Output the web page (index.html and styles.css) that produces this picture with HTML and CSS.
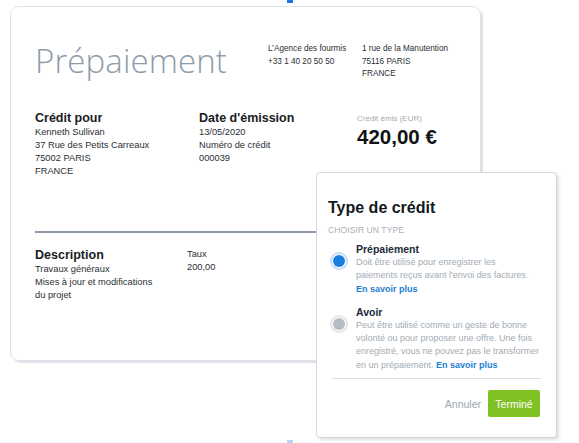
FILE: index.html
```html
<!DOCTYPE html>
<html lang="fr">
<head>
<meta charset="utf-8">
<title>Prépaiement</title>
<link rel="stylesheet" href="styles.css">
</head>
<body>
<div class="handle handle-top"></div>
<div class="card">
  <header class="head">
    <h1 class="title">Prépaiement</h1>
    <div class="addr">
      <div>L’Agence des fourmis</div>
      <div>+33 1 40 20 50 50</div>
    </div>
    <div class="addr">
      <div>1 rue de la Manutention</div>
      <div>75116 PARIS</div>
      <div>FRANCE</div>
    </div>
  </header>
  <section class="meta">
    <div class="col">
      <h2 class="h">Crédit pour</h2>
      <div class="lines">
        <div>Kenneth Sullivan</div>
        <div>37 Rue des Petits Carreaux</div>
        <div>75002 PARIS</div>
        <div>FRANCE</div>
      </div>
    </div>
    <div class="col">
      <h2 class="h">Date d'émission</h2>
      <div class="lines">
        <div>13/05/2020</div>
        <div>Numéro de crédit</div>
        <div>000039</div>
      </div>
    </div>
    <div class="col total">
      <div class="total-label">Crédit émis (EUR)</div>
      <div class="total-value">420,00 €</div>
    </div>
  </section>
  <hr class="rule">
  <section class="items">
    <div class="col">
      <h2 class="h">Description</h2>
      <div class="lines">
        <div>Travaux généraux</div>
        <div>Mises à jour et modifications</div>
        <div>du projet</div>
      </div>
    </div>
    <div class="col">
      <div class="lines">
        <div>Taux</div>
        <div>200,00</div>
      </div>
    </div>
  </section>
</div>

<div class="popover">
  <h3 class="pop-title">Type de crédit</h3>
  <div class="pop-sub">CHOISIR UN TYPE</div>
  <div class="option">
    <span class="radio radio-on"></span>
    <div class="opt-body">
      <div class="opt-label">Prépaiement</div>
      <div class="opt-desc">Doit être utilisé pour enregistrer les<br>paiements reçus avant l'envoi des factures.<br><a class="link">En savoir plus</a></div>
    </div>
  </div>
  <div class="option">
    <span class="radio radio-off"></span>
    <div class="opt-body">
      <div class="opt-label">Avoir</div>
      <div class="opt-desc">Peut être utilisé comme un geste de bonne volonté ou pour proposer une offre. Une fois enregistré, vous ne pouvez pas le transformer en un prépaiement. <a class="link">En savoir plus</a></div>
    </div>
  </div>
  <div class="pop-foot">
    <span class="btn-cancel">Annuler</span>
    <span class="btn-done">Terminé</span>
  </div>
</div>
<div class="handle handle-bottom"></div>
</body>
</html>
```

FILE: styles.css
```css
html, body {
  margin: 0;
  padding: 0;
  background: #ffffff;
}
body {
  font-family: "Liberation Sans", Arial, sans-serif;
  color: #2b2f33;
  width: 579px;
  height: 443px;
  overflow: hidden;
  position: relative;
}
.handle {
  position: absolute;
  width: 6px;
  height: 3px;
  left: 287px;
}
.handle-top { top: 0; background: #1c74e6; }
.handle-bottom { top: 440px; background: #b9d3f4; }

.card {
  margin: 6px 0 0 10px;
  width: 471px;
  height: 355px;
  box-sizing: border-box;
  border: 1px solid #dfe3e7;
  border-radius: 9px;
  box-shadow: 2px 2px 1px rgba(120, 135, 150, 0.25);
  padding: 0 24px 0 24px;
}

.head {
  display: grid;
  grid-template-columns: 233px 94px auto;
  align-items: start;
  padding-top: 34px;
}
.title {
  margin: 0;
  font-family: "Open Sans", sans-serif;
  font-weight: 300;
  font-size: 33px;
  line-height: 40px;
  color: #8d9caa;
  letter-spacing: 0.1px;
}
.addr {
  font-size: 8.2px;
  line-height: 12.5px;
  color: #2a2e33;
  padding-top: 2px;
}

.meta {
  display: grid;
  grid-template-columns: 164px 158px auto;
  margin-top: 30px;
}
.h {
  margin: 0;
  font-size: 12.5px;
  line-height: 15px;
  font-weight: bold;
  color: #1a1c1e;
}
.lines {
  font-size: 9.3px;
  line-height: 13px;
  color: #2a2e33;
}
.total { padding-top: 2px; }
.total-label {
  font-size: 8px;
  line-height: 11px;
  color: #a4abb2;
}
.total-value {
  font-size: 20.5px;
  line-height: 24px;
  font-weight: bold;
  color: #111315;
  margin-top: 1px;
}

.rule {
  margin: 53px 0 0 0;
  border: 0;
  height: 2px;
  background: #8e9aa7;
}

.items {
  display: grid;
  grid-template-columns: 152px auto;
  margin-top: 15px;
}

.popover {
  position: absolute;
  left: 316px;
  top: 172px;
  width: 241px;
  height: 266px;
  box-sizing: border-box;
  background: #ffffff;
  border: 1px solid #d2d8de;
  border-radius: 4px;
  box-shadow: 2px 2px 3px rgba(90, 105, 120, 0.2);
  padding: 26px 15px 0 11px;
}
.pop-title {
  margin: 0;
  font-size: 16px;
  line-height: 18px;
  font-weight: bold;
  color: #15191d;
}
.pop-sub {
  margin-top: 8px;
  font-size: 8.5px;
  line-height: 11px;
  color: #a9b1b8;
  letter-spacing: 0.1px;
}
.option {
  display: flex;
  gap: 7px;
  margin-top: 7px;
}
.option + .option { margin-top: 10px; }
.radio {
  flex: none;
  width: 12px;
  height: 12px;
  border-radius: 50%;
  margin: 12px 4px 0 5px;
  box-sizing: border-box;
}
.radio-on {
  background: #1a7ee0;
  box-shadow: 0 0 0 1px #ffffff, 0 0 0 3px #c4dcf5;
}
.radio-off {
  background: #b6bdc4;
  box-shadow: 0 0 0 1px #ffffff, 0 0 0 3px #e2e6e9;
}
.opt-body { flex: 1; }
.opt-label {
  font-size: 10.5px;
  line-height: 13px;
  font-weight: bold;
  color: #1b2b3c;
}
.opt-desc {
  font-size: 9px;
  line-height: 13.3px;
  color: #a2abb4;
}
.link {
  color: #1b7dd1;
  font-weight: bold;
}
.pop-foot {
  margin: 6px 0 0 4px;
  border-top: 1px solid #dde1e5;
  padding-top: 11px;
  display: flex;
  justify-content: flex-end;
  align-items: center;
  gap: 7px;
}
.btn-cancel {
  font-size: 10.5px;
  color: #9ca6af;
}
.btn-done {
  font-size: 10.5px;
  color: #ffffff;
  background: #80c124;
  border-radius: 2px;
  width: 52px;
  height: 27px;
  display: flex;
  align-items: center;
  justify-content: center;
  margin-right: 1px;
}
```
